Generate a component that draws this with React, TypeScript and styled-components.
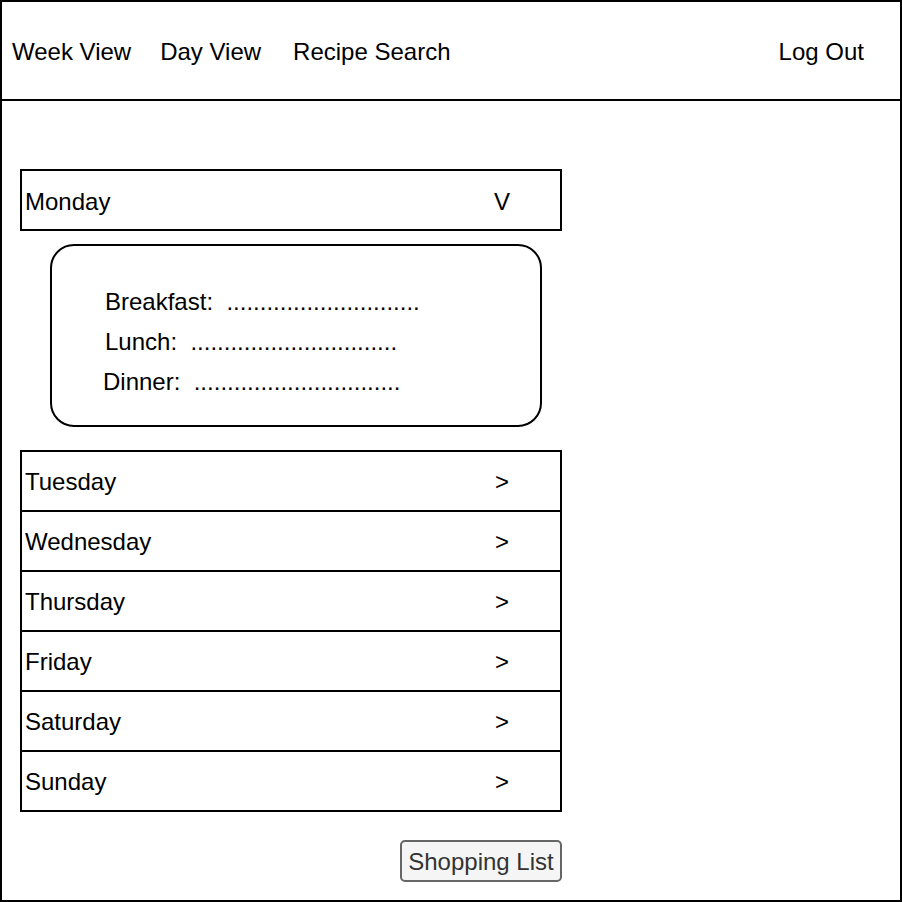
import { createGlobalStyle } from "styled-components";
import styled from "styled-components";

type Meal = { label: string; dots: number; indent: number };

const meals: Meal[] = [
  { label: "Breakfast:", dots: 29, indent: 53 },
  { label: "Lunch:", dots: 31, indent: 53 },
  { label: "Dinner:", dots: 31, indent: 51 },
];

const otherDays = ["Tuesday", "Wednesday", "Thursday", "Friday", "Saturday", "Sunday"];

export default function App() {
  return (
    <>
      <GlobalStyle />
      <Frame>
        <Header>
          <NavLink>Week View</NavLink>
          <NavLink>Day View</NavLink>
          <NavLink $extra={3}>Recipe Search</NavLink>
          <LogOut>Log Out</LogOut>
        </Header>

        <Main>
          <OpenDay>
            <DayName>Monday</DayName>
            <Arrow>V</Arrow>
          </OpenDay>

          <MealCard>
            {meals.map((meal) => (
              <MealLine key={meal.label} $indent={meal.indent}>
                {meal.label + "  " + ".".repeat(meal.dots)}
              </MealLine>
            ))}
          </MealCard>

          <DayList>
            {otherDays.map((day) => (
              <DayRow key={day}>
                <DayName>{day}</DayName>
                <Arrow>&gt;</Arrow>
              </DayRow>
            ))}
          </DayList>

          <ShoppingButton>Shopping List</ShoppingButton>
        </Main>
      </Frame>
    </>
  );
}

const GlobalStyle = createGlobalStyle`
  body {
    margin: 0;
    background: #ffffff;
    font-family: "Liberation Sans", Arial, sans-serif;
    color: #000000;
  }
`;

const Frame = styled.div`
  width: 902px;
  height: 902px;
  box-sizing: border-box;
  border: 2px solid #000000;
  display: flex;
  flex-direction: column;
`;

const Header = styled.header`
  height: 99px;
  box-sizing: border-box;
  border-bottom: 2px solid #000000;
  display: flex;
  align-items: center;
  gap: 29px;
  padding: 2px 36px 0 10px;
  font-size: 24px;
`;

const NavLink = styled.span<{ $extra?: number }>`
  margin-left: ${({ $extra }) => $extra ?? 0}px;
`;

const LogOut = styled.span`
  margin-left: auto;
`;

const Main = styled.main`
  width: 542px;
  display: flex;
  flex-direction: column;
  padding: 68px 0 0 18px;
  font-size: 24px;
`;

const OpenDay = styled.div`
  height: 62px;
  box-sizing: border-box;
  border: 2px solid #000000;
  display: flex;
  align-items: center;
  padding: 3px 0 0 3px;
`;

const DayName = styled.span`
  flex: 1;
`;

const Arrow = styled.span`
  width: 40px;
  text-align: center;
  margin-right: 38px;
`;

const MealCard = styled.div`
  width: 492px;
  height: 183px;
  box-sizing: border-box;
  margin: 13px 0 0 30px;
  border: 2px solid #000000;
  border-radius: 24px;
  padding-top: 36px;
  display: flex;
  flex-direction: column;
`;

const MealLine = styled.div<{ $indent: number }>`
  height: 40px;
  line-height: 40px;
  white-space: pre;
  padding-left: ${({ $indent }) => $indent}px;
`;

const DayList = styled.div`
  margin-top: 23px;
  border: 2px solid #000000;
  border-bottom: none;
`;

const DayRow = styled.div`
  height: 60px;
  box-sizing: border-box;
  border-bottom: 2px solid #000000;
  display: flex;
  align-items: center;
  padding: 2px 0 0 3px;
`;

const ShoppingButton = styled.button`
  align-self: flex-end;
  margin-top: 28px;
  width: 162px;
  height: 42px;
  box-sizing: border-box;
  border: 2px solid #666666;
  border-radius: 5px;
  background: #f5f5f5;
  color: #333333;
  font-family: "Liberation Sans", Arial, sans-serif;
  font-size: 24px;
  padding: 1px 0 0;
`;
